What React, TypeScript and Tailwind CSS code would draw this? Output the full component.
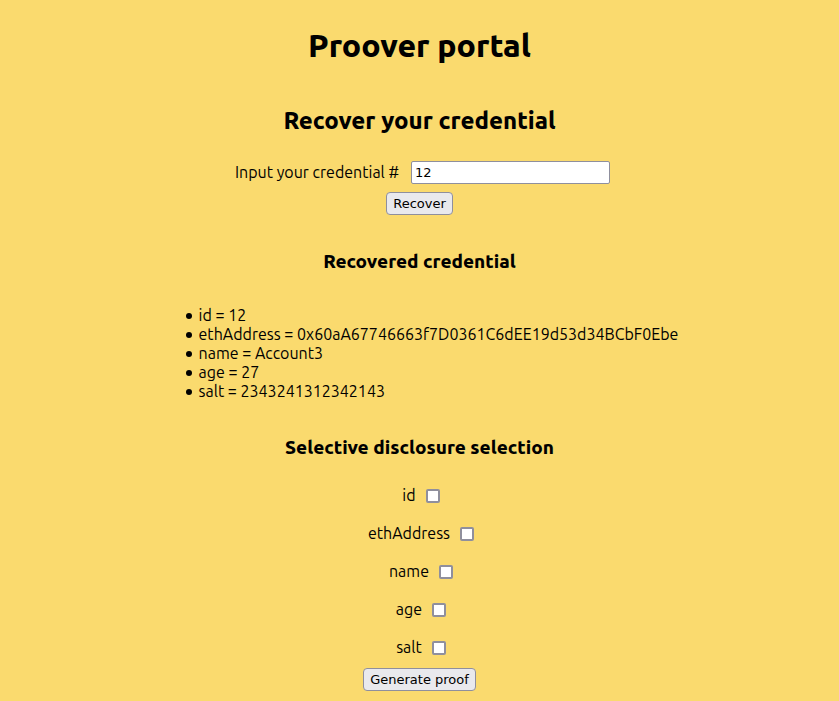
import { useState } from "react";

const fields = ["id", "ethAddress", "name", "age", "salt"];
const credential = [
  ["id", "12"],
  ["ethAddress", "0x60aA67746663f7D0361C6dEE19d53d34BCbF0Ebe"],
  ["name", "Account3"],
  ["age", "27"],
  ["salt", "2343241312342143"],
];

const buttonClass =
  "h-[23px] rounded-[4px] border border-[#8f8f9d] bg-[#e9e9ed] px-[6px] font-['DejaVu_Sans',sans-serif] text-[13px] leading-[19px] text-black";

export default function App() {
  const [id, setId] = useState("12");
  return (
    <main className="flex min-h-screen flex-col items-center bg-[#fada6e] pt-[26px] pb-[10px] font-['Ubuntu','Noto_Sans',sans-serif] text-[16px] leading-[19px] text-black">
      <h1 className="text-[32px] leading-[38px] font-extrabold">Proover portal</h1>
      <h2 className="mt-[43px] text-[24px] leading-[28px] font-extrabold">Recover your credential</h2>
      <div className="mt-[26px] flex items-center gap-[12px] pl-[6px]">
        <label htmlFor="credential">Input your credential #</label>
        <input
          id="credential"
          value={id}
          onChange={(e) => setId(e.target.value)}
          className="h-[23px] w-[199px] rounded-[2px] border border-[#8f8f9d] bg-white px-[3px] font-['DejaVu_Sans',sans-serif] text-[13px]"
        />
      </div>
      <button className={`${buttonClass} mt-[8px]`}>Recover</button>
      <h3 className="mt-[35px] text-[19px] leading-[22px] font-extrabold">Recovered credential</h3>
      <ul className="mt-[34px] pl-[25px]">
        {credential.map(([key, value]) => (
          <li
            key={key}
            className="flex items-center gap-[7px] before:size-[6px] before:rounded-full before:bg-black"
          >
            <span>{key} = {value}</span>
          </li>
        ))}
      </ul>
      <h3 className="mt-[35px] text-[19px] leading-[22px] font-extrabold">Selective disclosure selection</h3>
      <div className="mt-[28px] flex flex-col items-center gap-[19px]">
        {fields.map((f) => (
          <label key={f} className="flex items-center gap-[10px] pl-[3px]">
            {f}
            <input
              type="checkbox"
              className="size-[14px] appearance-none rounded-[2px] border-2 border-[#8f8f9d] bg-white checked:bg-[#0060df]"
            />
          </label>
        ))}
      </div>
      <button className={`${buttonClass} mt-[11px]`}>Generate proof</button>
    </main>
  );
}
